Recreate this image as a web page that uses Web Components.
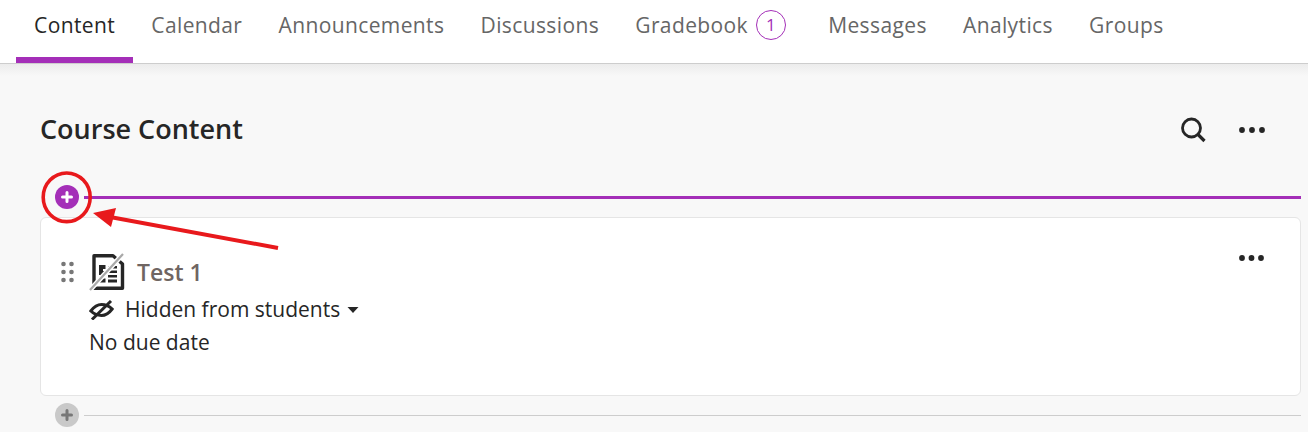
<!DOCTYPE html>
<html>
<head>
<meta charset="utf-8">
<style>
  html, body { margin: 0; padding: 0; }
  body { width: 1308px; height: 432px; overflow: hidden; background: #f8f8f8; font-family: "Open Sans", sans-serif; }
</style>
</head>
<body>
<course-page>
  <course-tabs slot="tabs">
    <tab-item active>Content</tab-item>
    <tab-item>Calendar</tab-item>
    <tab-item>Announcements</tab-item>
    <tab-item>Discussions</tab-item>
    <tab-item badge="1">Gradebook</tab-item>
    <tab-item>Messages</tab-item>
    <tab-item>Analytics</tab-item>
    <tab-item>Groups</tab-item>
  </course-tabs>
  <content-header>Course Content</content-header>
  <add-divider active></add-divider>
  <content-card name="Test 1"></content-card>
  <add-divider></add-divider>
</course-page>
<script>
class CoursePage extends HTMLElement {
  constructor() {
    super();
    this.attachShadow({ mode: 'open' });
  }
  connectedCallback() {
    this.shadowRoot.innerHTML = `
    <style>
      :host { display: block; position: relative; width: 1308px; height: 432px; overflow: hidden; }
      .main { padding: 0 7px 0 40px; display: flex; flex-direction: column; }
      .note { position: absolute; left: 0; top: 0; pointer-events: none; }
    </style>
    <slot name="tabs"></slot>
    <div class="main"><slot></slot></div>
    <svg class="note" width="300" height="270" viewBox="0 0 300 270">
      <ellipse cx="66.700" cy="197.300" rx="23.500" ry="24.300" fill="none" stroke="#e8191c" stroke-width="3.600"/>
      <path d="M278 248L110 217" stroke="#e8191c" stroke-width="4" fill="none"/>
      <path d="M93 213L116 208L111 227Z" fill="#e8191c"/>
    </svg>`;
  }
}

class CourseTabs extends HTMLElement {
  constructor() {
    super();
    this.attachShadow({ mode: 'open' });
  }
  connectedCallback() {
    this.shadowRoot.innerHTML = `
    <style>
      :host { display: flex; height: 63px; padding-left: 16px; background: #fff; border-bottom: 1px solid #cdcdcd; position: relative; }
      :host::after { content: ""; position: absolute; left: 0; right: 0; top: 64px; height: 12px; background: linear-gradient(#ececec, #f8f8f8); }
    </style>
    <slot></slot>`;
  }
}

class TabItem extends HTMLElement {
  constructor() {
    super();
    this.attachShadow({ mode: 'open' });
  }
  connectedCallback() {
    const badge = this.getAttribute('badge');
    this.shadowRoot.innerHTML = `
    <style>
      :host { display: flex; align-items: flex-start; height: 63px; box-sizing: border-box; padding: 11px 18.1px 0; font-size: 21px; font-weight: 500; letter-spacing: 0.38px; line-height: 29px; color: #666; white-space: nowrap; }
      :host([active]) { color: #262626; border-bottom: 6px solid #a42fb8; }
      .badge { width: 30px; height: 30px; margin: -1px 6px 0 8px; border: 1px solid #a42fb8; border-radius: 50%; box-sizing: border-box; color: #a42fb8; font-size: 17px; font-weight: 400; letter-spacing: 0; line-height: 28px; text-align: center; }
    </style>
    <slot></slot>${badge ? `<span class="badge">${badge}</span>` : ''}`;
  }
}

class ContentHeader extends HTMLElement {
  constructor() {
    super();
    this.attachShadow({ mode: 'open' });
  }
  connectedCallback() {
    this.shadowRoot.innerHTML = `
    <style>
      :host { display: flex; align-items: center; justify-content: space-between; height: 40px; margin-top: 44px; padding-right: 36px; font-size: 27px; font-weight: 600; color: #262626; }
      .tools { display: flex; align-items: center; gap: 33px; margin-top: 4px; }
      svg { display: block; }
    </style>
    <slot></slot>
    <div class="tools">
      <svg width="26" height="26" viewBox="0 0 26 26" fill="none" stroke="#262626">
        <circle cx="11.5" cy="11" r="9" stroke-width="2.8"/>
        <path d="M18 17.5L24.5 24" stroke-width="3.200"/>
      </svg>
      <svg width="26" height="6" viewBox="0 0 26 6" fill="#262626"><circle cx="3" cy="3" r="2.9"/><circle cx="13" cy="3" r="2.9"/><circle cx="23" cy="3" r="2.9"/></svg>
    </div>`;
  }
}

class AddDivider extends HTMLElement {
  constructor() {
    super();
    this.attachShadow({ mode: 'open' });
  }
  connectedCallback() {
    this.shadowRoot.innerHTML = `
    <style>
      :host { display: flex; align-items: center; height: 24px; padding-left: 15px; --tone: #c9c9c9; --sign: #777; --rule: #cdcdcd; --w: 1px; margin-top: 7px; }
      :host([active]) { --tone: #a42fb8; --sign: #fff; --rule: #a42fb8; --w: 3px; margin-top: 37px; margin-bottom: 8px; }
      svg { display: block; flex: none; }
      .rule { flex: 1; height: var(--w); margin-left: 5px; background: var(--rule); }
    </style>
    <svg width="24" height="24" viewBox="0 0 24 24">
      <circle cx="12" cy="12" r="12" fill="var(--tone)"/>
      <path d="M12 7.500V16.500M7.500 12H16.500" stroke="var(--sign)" stroke-width="3" stroke-linecap="round"/>
    </svg>
    <div class="rule"></div>`;
  }
}

class ContentCard extends HTMLElement {
  constructor() {
    super();
    this.attachShadow({ mode: 'open' });
  }
  connectedCallback() {
    this.shadowRoot.innerHTML = `
    <style>
      :host { display: block; height: 179px; box-sizing: border-box; background: #fff; border: 1px solid #e5e5e5; border-radius: 6px; padding: 35px 0 0 20px; position: relative; color: #262626; }
      .top { display: flex; align-items: center; height: 38px; }
      .grip { display: block; margin-right: 14px; }
      .name { font-size: 23px; font-weight: 600; color: #6f6562; margin-left: 12px; line-height: 30px; }
      .meta { margin-left: 28px; font-size: 21px; line-height: 27px; }
      .status { display: flex; align-items: center; margin-top: 5px; height: 27px; }
      .status svg.eye { margin-right: 11px; }
      .status svg.caret { margin-left: 7px; }
      .due { margin-top: 6px; }
      .more { position: absolute; right: 36px; top: 37px; display: block; }
    </style>
    <div class="top">
      <svg class="grip" width="14" height="22" viewBox="0 0 14 22" fill="#777">
        <circle cx="2.500" cy="3" r="2.300"/><circle cx="10.500" cy="3" r="2.300"/>
        <circle cx="2.500" cy="11" r="2.300"/><circle cx="10.500" cy="11" r="2.300"/>
        <circle cx="2.500" cy="19" r="2.300"/><circle cx="10.500" cy="19" r="2.300"/>
      </svg>
      <svg width="36" height="38" viewBox="0 0 36 38">
        <path d="M5 2.700H24L33.500 11V35.300H5Z" fill="#fff" stroke="#262626" stroke-width="3.400" stroke-linejoin="round"/>
        <path d="M10 12H16.500V16H14V18H16.500V22H10Z M19 13H28V15.500H19Z M19 17.500H28V20H19Z M19 22H28V24.500H19Z M10 25.500H16.500V29.500H10Z M19 26.500H28V29.500H19Z" fill="#262626"/>
        <path d="M1 37L34 1" stroke="#fff" stroke-width="5"/>
        <path d="M1 37L34 1" stroke="#a9a9a9" stroke-width="2.200"/>
      </svg>
      <span class="name">${this.getAttribute('name')}</span>
    </div>
    <div class="meta">
      <div class="status">
        <svg class="eye" width="25" height="20" viewBox="0 0 25 20" fill="none" stroke="#262626" stroke-width="3">
          <path d="M1.800 11C6 5.500 9.500 4.500 12.500 4.500C15.500 4.500 19 5 23.200 9C19 14.500 15.500 15.500 12.500 15.500C9.500 15.500 6 15 1.800 11Z"/>
          <path d="M3 19.500L22 1"/>
        </svg>
        <span>Hidden from students</span>
        <svg class="caret" width="12" height="6" viewBox="0 0 12 6" fill="#262626"><path d="M0.500 0H11.500L6 6Z"/></svg>
      </div>
      <div class="due">No due date</div>
    </div>
    <svg class="more" width="25" height="6" viewBox="0 0 25 6" fill="#262626"><circle cx="3" cy="3" r="2.900"/><circle cx="12.500" cy="3" r="2.900"/><circle cx="22" cy="3" r="2.900"/></svg>`;
  }
}

customElements.define('course-page', CoursePage);
customElements.define('course-tabs', CourseTabs);
customElements.define('tab-item', TabItem);
customElements.define('content-header', ContentHeader);
customElements.define('add-divider', AddDivider);
customElements.define('content-card', ContentCard);
</script>
</body>
</html>
